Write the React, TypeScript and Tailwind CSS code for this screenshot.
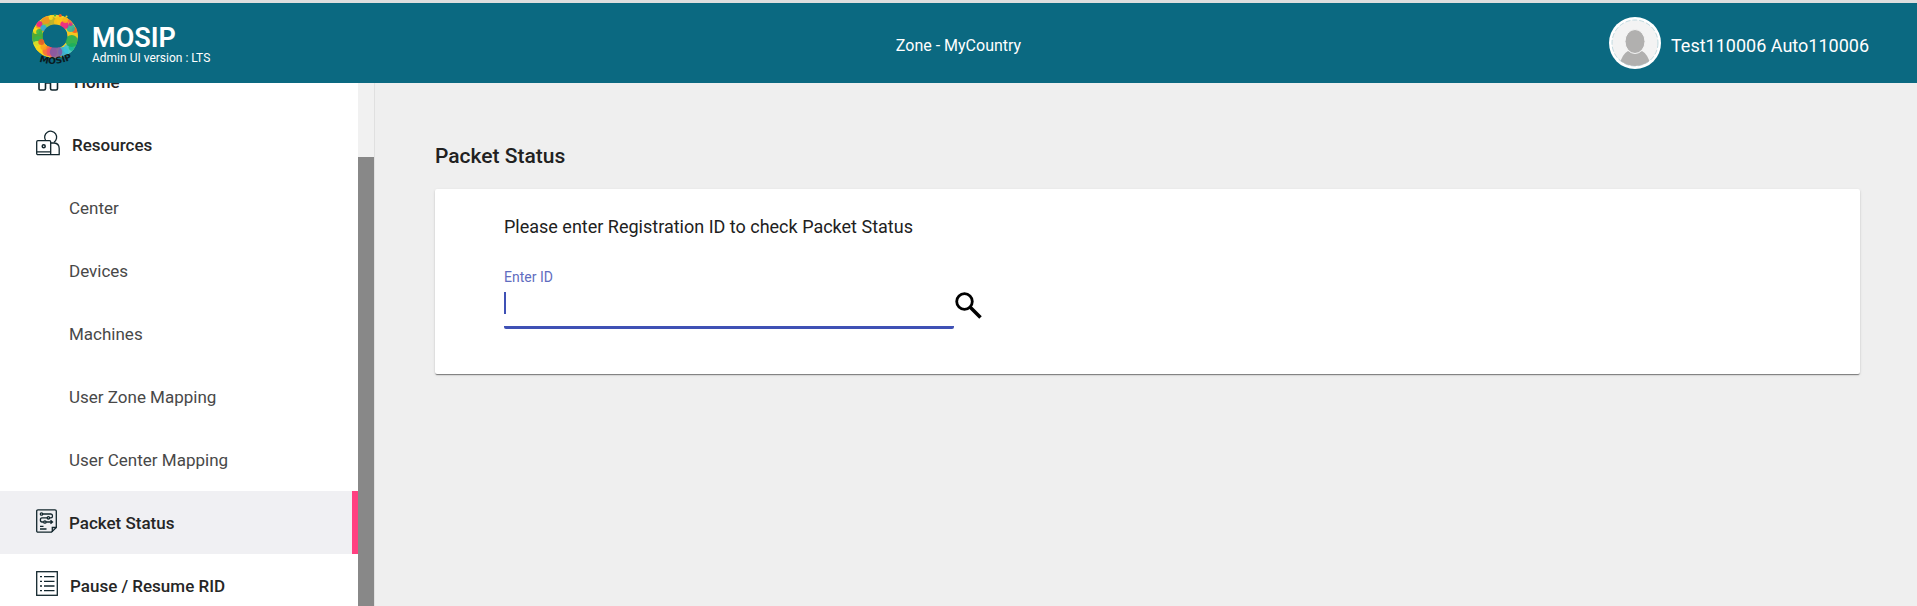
import React from "react";

const ink = "#12262d";

function Logo() {
  const dots: [number, number, number, string][] = [
    [10, 13, 5, "#f7931e"],
    [14, 9, 5, "#8cc63f"],
    [20, 8, 5, "#b9b02a"],
    [27, 8, 5, "#fcc216"],
    [6, 22, 6, "#3aa535"],
    [7, 27, 5, "#39b54a"],
    [5, 17, 3, "#ffe01a"],
    [8, 10, 3, "#ec1c8c"],
    [12, 14, 3, "#29abe2"],
    [14, 6, 4, "#f7931e"],
    [6, 32, 5, "#e6df26"],
    [11, 36, 6, "#fcd116"],
    [16, 37, 5, "#f7693c"],
    [12, 33, 3, "#f9a01c"],
    [20, 38, 5, "#ee4d6d"],
    [31, 38, 5, "#29abe2"],
    [36, 35, 5, "#35c4dc"],
    [24, 38, 6, "#7f5aa8"],
    [40, 20, 5, "#f9c41c"],
    [42, 16, 3, "#f15a24"],
    [40, 33, 4, "#17b890"],
    [39, 27, 6, "#1fae54"],
    [38, 14, 4, "#2bb3a3"],
    [32, 11, 4, "#ec1c8c"],
    [38, 10, 2, "#d9278e"],
    [33, 6, 3, "#fcb116"],
    [37, 7, 2, "#f7693c"],
    [19, 4, 2, "#ffe01a"],
    [8, 18, 3, "#39b54a"],
    [10, 28, 3, "#f15a24"],
  ];
  return (
    <svg viewBox="1 0 44 52" className="h-[52px] w-[46px] shrink-0" preserveAspectRatio="none" aria-hidden="true">
      <defs>
        <clipPath id="logo-edge">
          <circle cx="23" cy="22.500" r="22" />
        </clipPath>
        <path id="logo-arc" d="M4 46Q23 55 43 43" />
      </defs>
      <g clipPath="url(#logo-edge)">
        <circle cx="23" cy="22.500" r="17" fill="none" stroke="#f3cf2a" strokeWidth="10" />
        {dots.map(([x, y, r, c], i) => (
          <circle key={i} cx={x} cy={y} r={r} fill={c} fillOpacity="0.88" />
        ))}
      </g>
      <circle cx="28" cy="1.500" r="1.500" fill="#f15a24" />
      <circle cx="34" cy="2.500" r="1" fill="#fcd116" />
      <circle cx="23" cy="1.500" r="1" fill="#39b54a" />
      <circle cx="23" cy="22" r="11.500" fill="#0b6981" />
      <text fontFamily="DejaVu Sans, sans-serif" fontWeight="700" fontSize="9" fill="#0a1a20">
        <textPath href="#logo-arc" startOffset="50%" textAnchor="middle">
          MOSIP
        </textPath>
      </text>
    </svg>
  );
}

function HomeIcon() {
  return (
    <svg viewBox="0 0 24 24" className="h-6 w-6" fill="none" stroke={ink} strokeWidth="1.600" strokeLinejoin="round" aria-hidden="true">
      <path d="M2 10.500 12 2l10 8.500M3 9.500V21q0 1 1 1h4q1.500 0 1.500-1.500V15h5v5.500q0 1.500 1.500 1.500h4q1.500 0 1.500-1.500V9.500" />
    </svg>
  );
}

function ResourcesIcon() {
  return (
    <svg viewBox="0 0 24 26" className="h-[26px] w-6" fill="none" stroke={ink} strokeWidth="1.300" aria-hidden="true">
      <path d="M9.600 10.500A6 6 0 1 1 18 12.200" />
      <rect x="0.700" y="10.700" width="14" height="14" rx="1.200" />
      <path d="M.7 21.800h14M14.700 13h3.500q5 .4 5 5.500v6.200h-9" />
      <circle cx="7.700" cy="16.300" r="1.500" strokeWidth="1.500" />
    </svg>
  );
}

function PacketIcon() {
  return (
    <svg viewBox="0 0 21 24" className="h-6 w-[21px]" fill="none" stroke={ink} strokeWidth="1.300" aria-hidden="true">
      <path d="M2 .8h17q1.300 0 1.300 1.300V18.500L15.500 23.200H2Q.7 23.200.7 21.900V2.100Q.7.800 2 .8Z" />
      <path d="M20.300 18.500h-4v4.500" />
      <circle cx="5.500" cy="5" r="1.200" />
      <path d="M6.700 5h8.200q1.600 0 1.600 1.900t-1.600 1.900h-1.400M11.300 8.800H6q-1.600 0-1.600 2.100T6 13h1.700M10.100 13h6.400m-2-1.700 2 1.700-2 1.700" />
      <circle cx="12.400" cy="8.800" r="1.200" />
      <circle cx="8.900" cy="13" r="1.200" />
      <path d="M4 17.400h3.500M4 20h6.500" />
    </svg>
  );
}

function ListIcon() {
  return (
    <svg viewBox="0 0 22 25" className="h-[25px] w-[22px]" fill="none" stroke={ink} strokeWidth="1.300" aria-hidden="true">
      <rect x="0.700" y="0.700" width="20.600" height="23.600" />
      <path d="M4 5.700h2M8 5.700h10.500M4 10.300h2M8 10.300h10.500M4 15h2M8 15h10.500M4 19.700h2M8 19.700h10.500" />
    </svg>
  );
}

function Avatar() {
  return (
    <svg viewBox="0 0 52 52" className="h-[52px] w-[52px] shrink-0" role="img" aria-label="Profile">
      <defs>
        <clipPath id="avatar-clip">
          <circle cx="26" cy="26" r="23" />
        </clipPath>
      </defs>
      <circle cx="26" cy="26" r="26" fill="#fff" />
      <circle cx="26" cy="26" r="23" fill="#f3f3f3" stroke="#a9ccd4" strokeWidth="0.700" strokeDasharray="5 2" />
      <g clipPath="url(#avatar-clip)" fill="#b1b0af">
        <path d="M10 49q3-12 9-15 7 5 14 0 6 3 9 15Z" />
        <ellipse cx="26" cy="24.500" rx="10" ry="12" stroke="#f3f3f3" strokeWidth="1" />
      </g>
    </svg>
  );
}

const children = ["Center", "Devices", "Machines", "User Zone Mapping", "User Center Mapping"];

function TopItem({ icon, label, gap, active }: { icon: React.ReactNode; label: string; gap: string; active?: boolean }) {
  return (
    <li>
      <a
        href="#"
        aria-current={active ? "page" : undefined}
        className={`flex h-[63px] items-center pl-9 text-[17px] font-medium text-[#262626] ${gap} ${
          active ? "border-r-6 border-[#ff4081] bg-[#f0f0f3]" : ""
        }`}
      >
        <span className="pb-1">{icon}</span>
        <span className="pt-0.5">{label}</span>
      </a>
    </li>
  );
}

export default function App() {
  return (
    <div className="flex h-screen flex-col bg-[#efefef] font-['Roboto',sans-serif] text-[#212121]">
      <header className="grid h-[83px] shrink-0 grid-cols-[1fr_auto_1fr] items-center border-t-3 border-[#dedede] bg-[#0b6981] text-white">
        <div className="flex items-center gap-[14px] pb-1.5 pl-8">
          <Logo />
          <div className="pt-2">
            <div className="text-[27px] leading-7 font-semibold">MOSIP</div>
            <div className="text-xs leading-3">Admin UI version : LTS</div>
          </div>
        </div>
        <div className="pt-1.5 text-base">Zone - MyCountry</div>
        <div className="flex items-center justify-end gap-[10px] pr-12">
          <Avatar />
          <span className="pt-1.5 text-lg">Test110006 Auto110006</span>
        </div>
      </header>

      <div className="flex min-h-0 flex-1">
        <aside className="flex w-[375px] shrink-0 border-r border-[#e0e0e0] bg-white">
          <nav className="min-w-0 flex-1 overflow-hidden">
            <ul className="-mt-[33px]">
              <TopItem icon={<HomeIcon />} label="Home" gap="gap-[14px]" />
              <TopItem icon={<ResourcesIcon />} label="Resources" gap="gap-3" />
              {children.map((c) => (
                <li key={c}>
                  <a href="#" className="flex h-[63px] items-center pt-0.5 pl-[69px] text-[17px] text-[#484848]">
                    {c}
                  </a>
                </li>
              ))}
              <TopItem icon={<PacketIcon />} label="Packet Status" gap="gap-3" active />
              <TopItem icon={<ListIcon />} label="Pause / Resume RID" gap="gap-3" />
            </ul>
          </nav>
          <div className="flex w-4 flex-col bg-[#f1f1f1] pt-[74px]" aria-hidden="true">
            <div className="flex-1 bg-[#888888]" />
          </div>
        </aside>

        <main className="min-w-0 flex-1 pt-[60px] pr-[57px] pl-[60px]">
          <h1 className="text-[21px] leading-[26px] font-medium">Packet Status</h1>
          <section className="mt-5 rounded-[2px] bg-white px-[69px] pt-[26px] pb-[45px] shadow-[0_2px_1px_-1px_rgba(0,0,0,0.3),0_1px_1px_0_rgba(0,0,0,0.2),0_1px_3px_0_rgba(0,0,0,0.12)]">
            <p className="text-lg leading-6">Please enter Registration ID to check Packet Status</p>
            <form className="mt-[30px] flex" onSubmit={(e) => e.preventDefault()}>
              <div className="w-[450px]">
                <label htmlFor="rid" className="block text-sm leading-4 text-[#5f6dc0]">
                  Enter ID
                </label>
                <div className="relative">
                  <input
                    id="rid"
                    type="text"
                    className="block h-11 w-full rounded-b-xs border-b-3 border-[#3f51b5] bg-transparent pb-2 text-lg caret-transparent outline-none"
                  />
                  <span className="absolute top-[7px] left-0 h-[22px] w-[2px] bg-[#3f51b5]" />
                </div>
              </div>
              <button type="submit" aria-label="Search" className="mt-[22px] h-[30px] w-[30px]">
                <svg viewBox="0 0 30 30" className="h-[30px] w-[30px]" fill="none" stroke="#000">
                  <circle cx="10.500" cy="10.500" r="7.800" strokeWidth="2.800" />
                  <path d="m15.500 15.500 11 11" strokeWidth="3.600" />
                </svg>
              </button>
            </form>
          </section>
        </main>
      </div>
    </div>
  );
}
